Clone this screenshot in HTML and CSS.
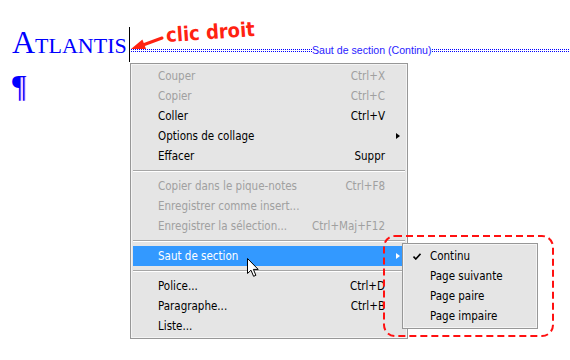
FILE: index.html
```html
<!DOCTYPE html>
<html lang="fr">
<head>
    <meta charset="UTF-8">
    <meta name="viewport" content="width=device-width, initial-scale=1.0">
    <title>Saut de section</title>
    <link rel="stylesheet" href="styles.css">
</head>
<body>

<div class="doc">
    <div class="title-row">
        <div class="title">Atlantis</div>
        <div class="caret"></div>
        <div class="section-break">
            <span class="dots dots-left"></span>
            <span class="break-label">Saut de section (Continu)</span>
            <span class="dots"></span>
        </div>
    </div>
    <div class="pilcrow">¶</div>
</div>

<!-- annotation -->
<div class="note">clic droit</div>
<svg class="note-arrow" width="36" height="20" viewBox="0 0 36 20">
    <path d="M15 11 L34 4" stroke="#f21" stroke-width="3" stroke-linecap="round"/>
    <polygon points="3,15 18,15 14.4,5.5" fill="#f21"/>
</svg>

<div class="menu context-menu">
    <div class="item disabled"><span>Couper</span><span class="key">Ctrl+X</span></div>
    <div class="item disabled"><span>Copier</span><span class="key">Ctrl+C</span></div>
    <div class="item"><span>Coller</span><span class="key">Ctrl+V</span></div>
    <div class="item has-sub"><span>Options de collage</span></div>
    <div class="item"><span>Effacer</span><span class="key">Suppr</span></div>
    <div class="sep"></div>
    <div class="item disabled"><span>Copier dans le pique-notes</span><span class="key">Ctrl+F8</span></div>
    <div class="item disabled"><span>Enregistrer comme insert...</span></div>
    <div class="item disabled"><span>Enregistrer la sélection...</span><span class="key">Ctrl+Maj+F12</span></div>
    <div class="sep"></div>
    <div class="item has-sub active"><span>Saut de section</span></div>
    <div class="sep"></div>
    <div class="item"><span>Police...</span><span class="key">Ctrl+D</span></div>
    <div class="item"><span>Paragraphe...</span><span class="key">Ctrl+B</span></div>
    <div class="item"><span>Liste...</span></div>
</div>

<div class="menu submenu">
    <div class="item checked">
        <svg class="check" width="8" height="7" viewBox="0 0 8 7">
            <path d="M0.5 3.5 L2.8 6 L7.5 0.8" stroke="#000" stroke-width="1.6" fill="none"/>
        </svg>
        <span>Continu</span>
    </div>
    <div class="item"><span>Page suivante</span></div>
    <div class="item"><span>Page paire</span></div>
    <div class="item"><span>Page impaire</span></div>
</div>

<svg class="callout" width="171" height="102" viewBox="0 0 171 102">
    <rect x="1" y="1" width="169" height="100" rx="11" fill="none" stroke="#f11" stroke-width="2" stroke-dasharray="7 4"/>
</svg>

<svg class="pointer" width="13" height="20" viewBox="0 0 13 20">
    <path d="M0.5 0.5 L0.5 15.5 L4 12.2 L6.6 18.3 L8.9 17.3 L6.4 11.4 L11.2 11.4 Z" fill="#fff" stroke="#000" stroke-width="1" stroke-linejoin="miter"/>
</svg>

</body>
</html>
```

FILE: styles.css
```css
body {
    margin: 0;
    background-color: #fff;
    width: 570px;
    height: 360px;
    overflow: hidden;
    position: relative;
    font-family: "DejaVu Sans Condensed", "DejaVu Sans", sans-serif;
    font-stretch: condensed;
}

.doc {
    padding: 25px 0 0 12px;
}

.title-row {
    display: flex;
    align-items: flex-start;
}

.title {
    width: 117px;
    font-family: "Liberation Serif", serif;
    font-variant: small-caps;
    font-size: 32px;
    line-height: 35px;
    color: #0000ff;
    white-space: nowrap;
}

.caret {
    width: 1px;
    height: 35px;
    margin-top: 2px;
    background-color: #000;
}

.section-break {
    flex: 1;
    display: flex;
    align-items: center;
    height: 14px;
    margin-top: 18px;
    margin-left: 1px;
}

.dots {
    flex: 1;
    height: 3px;
    background:
        linear-gradient(#fff, #fff) 0 1px / 100% 1px no-repeat,
        repeating-linear-gradient(90deg, #00f 0 1px, transparent 1px 2px);
}

.dots-left {
    flex: 0 0 181px;
}

.break-label {
    font-family: "Liberation Sans", Arial, sans-serif;
    font-stretch: normal;
    font-size: 10.6px;
    color: #2a1cff;
    white-space: nowrap;
}

.pilcrow {
    margin-top: 10px;
    font-family: "Liberation Serif", serif;
    font-size: 31px;
    line-height: 30px;
    color: #0000ff;
    text-shadow: 1px 0 rgba(210, 60, 255, 0.6);
}

.note {
    position: absolute;
    left: 166px;
    top: 21px;
    font-family: "DejaVu Sans Condensed", "DejaVu Sans", sans-serif;
    font-weight: bold;
    font-size: 20px;
    line-height: 22px;
    color: #f21;
    transform: rotate(-4deg);
}

.note-arrow {
    position: absolute;
    left: 128px;
    top: 34px;
}

.menu {
    position: absolute;
    box-sizing: border-box;
    border: 1px solid #979797;
    background-color: #e5e5e5;
    box-shadow: inset 0 0 0 1px #f4f4f4;
    padding: 2px;
    font-size: 11.5px;
    color: #000;
}

.context-menu {
    left: 130px;
    top: 63px;
    width: 278px;
}

.submenu {
    left: 402px;
    top: 243px;
    width: 136px;
}

.item {
    position: relative;
    display: flex;
    justify-content: space-between;
    align-items: center;
    height: 20px;
    padding: 0 20px 0 25px;
    white-space: nowrap;
}

.item.disabled {
    color: #a0a0a0;
}

.item.active {
    background-color: #3399ff;
    color: #fff;
}

.has-sub::after {
    content: "";
    position: absolute;
    right: 5px;
    top: 7px;
    border-left: 4px solid #000;
    border-top: 3px solid transparent;
    border-bottom: 3px solid transparent;
}

.active.has-sub::after {
    border-left-color: #fff;
}

.check {
    position: absolute;
    left: 8px;
    top: 7px;
}

.sep {
    margin: 4px 0;
    border-top: 1px solid #a6a6a6;
    border-bottom: 1px solid #fff;
    height: 0;
}

.callout {
    position: absolute;
    left: 383px;
    top: 235px;
}

.pointer {
    position: absolute;
    left: 247px;
    top: 258px;
}
```
